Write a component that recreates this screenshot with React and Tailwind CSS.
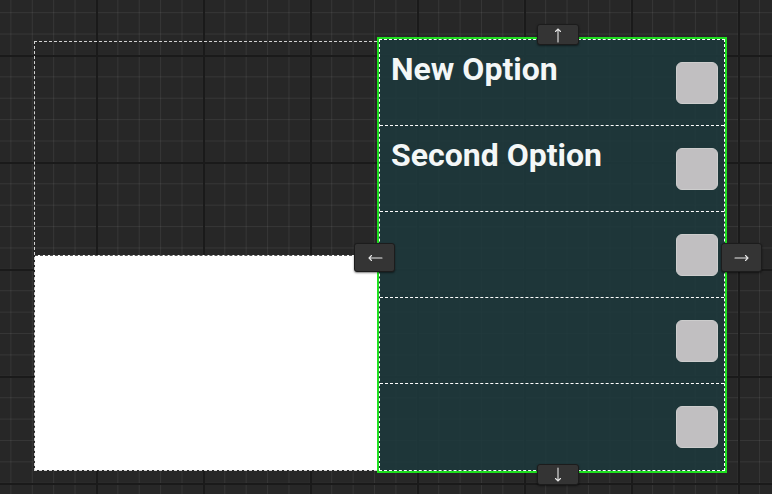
import React from "react";

const rows = ["New Option", "Second Option", "", "", ""];

function Arrow({ dir }) {
  // thin arrow glyph drawn as a line with a small head
  const rot = { up: 0, right: 90, down: 180, left: 270 }[dir];
  return (
    <svg width="16" height="16" viewBox="0 0 16 16" style={{ transform: `rotate(${rot}deg)` }}>
      <path d="M8 15V2M5.5 4.5L8 2l2.5 2.5" fill="none" stroke="#e8e8e8" strokeWidth="1.1" strokeLinecap="round" />
    </svg>
  );
}

function Handle({ dir, className }) {
  return (
    <div
      className={`absolute flex items-center justify-center rounded-[3px] bg-[#343434] border border-[#1c1c1c] shadow-[0_1px_2px_rgba(0,0,0,0.5)] ${className}`}
    >
      <Arrow dir={dir} />
    </div>
  );
}

function OptionRow({ label, last }) {
  return (
    <div
      className={`flex h-[86px] justify-between pl-[11px] pr-[6px] ${
        last ? "" : "border-b border-dashed border-white"
      }`}
    >
      <span className="pt-[13px] text-[32px] font-bold leading-none text-[#f4f7f7]">{label}</span>
      <div className="self-center h-[42px] w-[42px] rounded-[6px] bg-[#c1bfc1] border border-[#cdcdcd]" />
    </div>
  );
}

export default function App() {
  return (
    <div
      className="relative h-[494px] w-[772px] overflow-hidden bg-[#272727] [background-image:linear-gradient(to_right,#1a1a1a_2px,transparent_2px),linear-gradient(to_bottom,#1a1a1a_2px,transparent_2px),linear-gradient(to_right,rgba(255,255,255,0.07)_1px,transparent_1px),linear-gradient(to_bottom,rgba(255,255,255,0.07)_1px,transparent_1px)] [background-size:107px_107px,107px_107px,21.4px_21.4px,21.4px_21.4px] [background-position:-11px_-52px]"
      style={{ fontFamily: 'Roboto, "Noto Sans", sans-serif' }}
    >
      <div className="absolute left-[34px] top-[37px] flex items-start">
        {/* left selection box with white area */}
        <div className="mt-[4px] flex h-[430px] w-[343px] flex-col justify-end border-l border-t border-b border-dashed border-white/80">
          <div className="h-[215px] w-full border-t border-dashed border-[#555] bg-white" />
        </div>

        {/* option list panel */}
        <div className="h-[436px] w-[350px] border-2 border-[#1fe01f]">
          <div className="h-full w-full border border-dashed border-white bg-[#1e383c]/90">
            {rows.map((r, i) => (
              <OptionRow key={i} label={r} last={i === rows.length - 1} />
            ))}
          </div>
        </div>

        <Handle dir="up" className="left-[503px] top-[-13px] h-[21px] w-[42px]" />
        <Handle dir="left" className="left-[320px] top-[206px] h-[29px] w-[41px]" />
        <Handle dir="right" className="left-[687px] top-[206px] h-[29px] w-[41px]" />
        <Handle dir="down" className="left-[503px] top-[427px] h-[21px] w-[42px]" />
      </div>
    </div>
  );
}
